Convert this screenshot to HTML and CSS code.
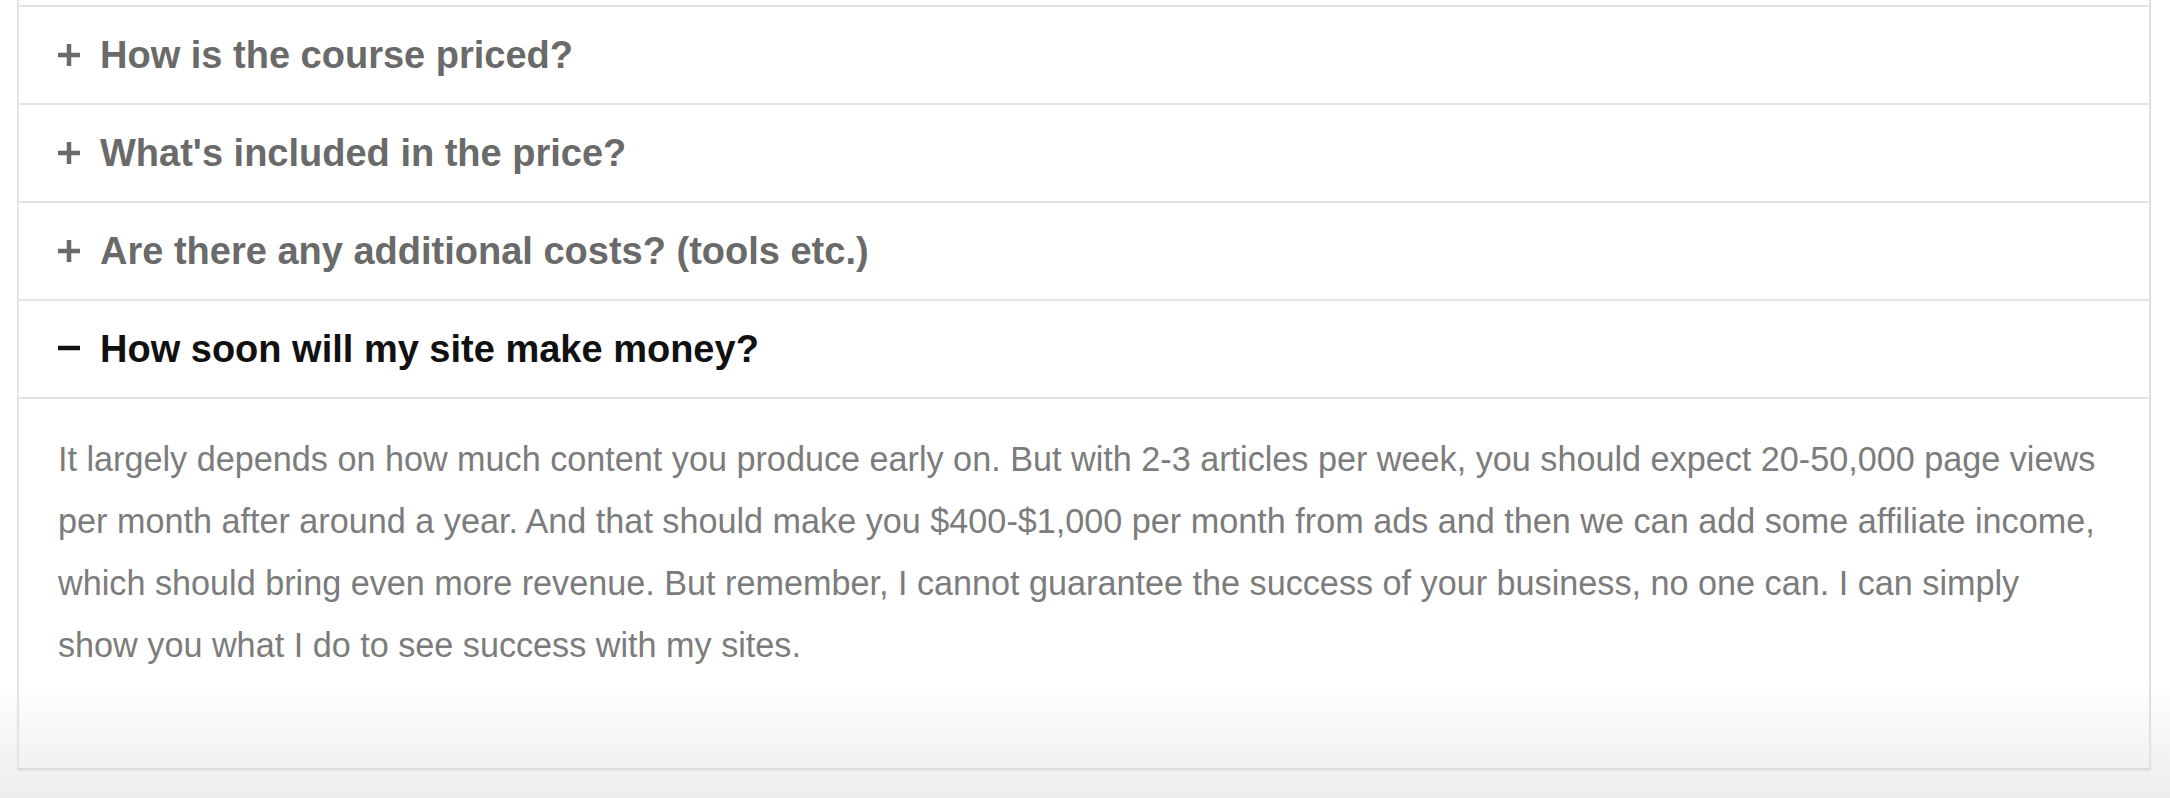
FILE: index.html
```html
<!DOCTYPE html>
<html lang="en">
<head>
<meta charset="utf-8">
<title>FAQ</title>
<link rel="stylesheet" href="styles.css">
</head>
<body>
<div class="faq">
  <div class="item">
    <div class="q">
      <svg class="icon" viewBox="0 0 22 22"><path d="M11 0v22M0 11h22"/></svg>
      <span>How is the course priced?</span>
    </div>
  </div>
  <div class="item">
    <div class="q">
      <svg class="icon" viewBox="0 0 22 22"><path d="M11 0v22M0 11h22"/></svg>
      <span>What's included in the price?</span>
    </div>
  </div>
  <div class="item">
    <div class="q">
      <svg class="icon" viewBox="0 0 22 22"><path d="M11 0v22M0 11h22"/></svg>
      <span>Are there any additional costs? (tools etc.)</span>
    </div>
  </div>
  <div class="item open">
    <div class="q">
      <svg class="icon" viewBox="0 0 22 22"><path d="M0 10h22"/></svg>
      <span>How soon will my site make money?</span>
    </div>
    <div class="a">
      <p>It largely depends on how much content you produce early on. But with 2-3 articles per week, you should expect 20-50,000 page views per month after around a year. And that should make you $400-$1,000 per month from ads and then we can add some affiliate income, which should bring even more revenue. But remember, I cannot guarantee the success of your business, no one can. I can simply show you what I do to see success with my sites.</p>
    </div>
  </div>
</div>
</body>
</html>
```
FILE: styles.css
```css
html, body {
  margin: 0;
  padding: 0;
}
body {
  width: 2170px;
  height: 798px;
  overflow: hidden;
  font-family: "Liberation Sans", Arial, Helvetica, sans-serif;
  background: linear-gradient(to bottom, #ffffff 0px, #ffffff 685px, #f1f1f1 768px, #eeeeee 798px);
}
.faq {
  margin: 0 19px 0 17px;
  padding-top: 5px;
  border-left: 2px solid #e4e4e4;
  border-right: 2px solid #e0e0e0;
  border-bottom: 2px solid #dcdcdc;
  box-shadow: 0 1px 2px rgba(0,0,0,0.04);
}
.item {
  border-top: 2px solid #e4e4e4;
}
.q {
  height: 96px;
  display: flex;
  align-items: center;
  padding-left: 39px;
  gap: 20px;
  font-weight: bold;
  font-size: 38px;
  color: #6a6a6a;
}
.icon {
  width: 22px;
  height: 22px;
  flex: none;
  fill: none;
  stroke: currentColor;
  stroke-width: 4.5;
}
.open .q {
  color: #111111;
}
.a {
  border-top: 2px solid #e4e4e4;
  padding: 29px 45px 92px 39px;
}
.a p {
  margin: 0;
  font-size: 34.2px;
  line-height: 62px;
  color: #7c7c7c;
}
```
